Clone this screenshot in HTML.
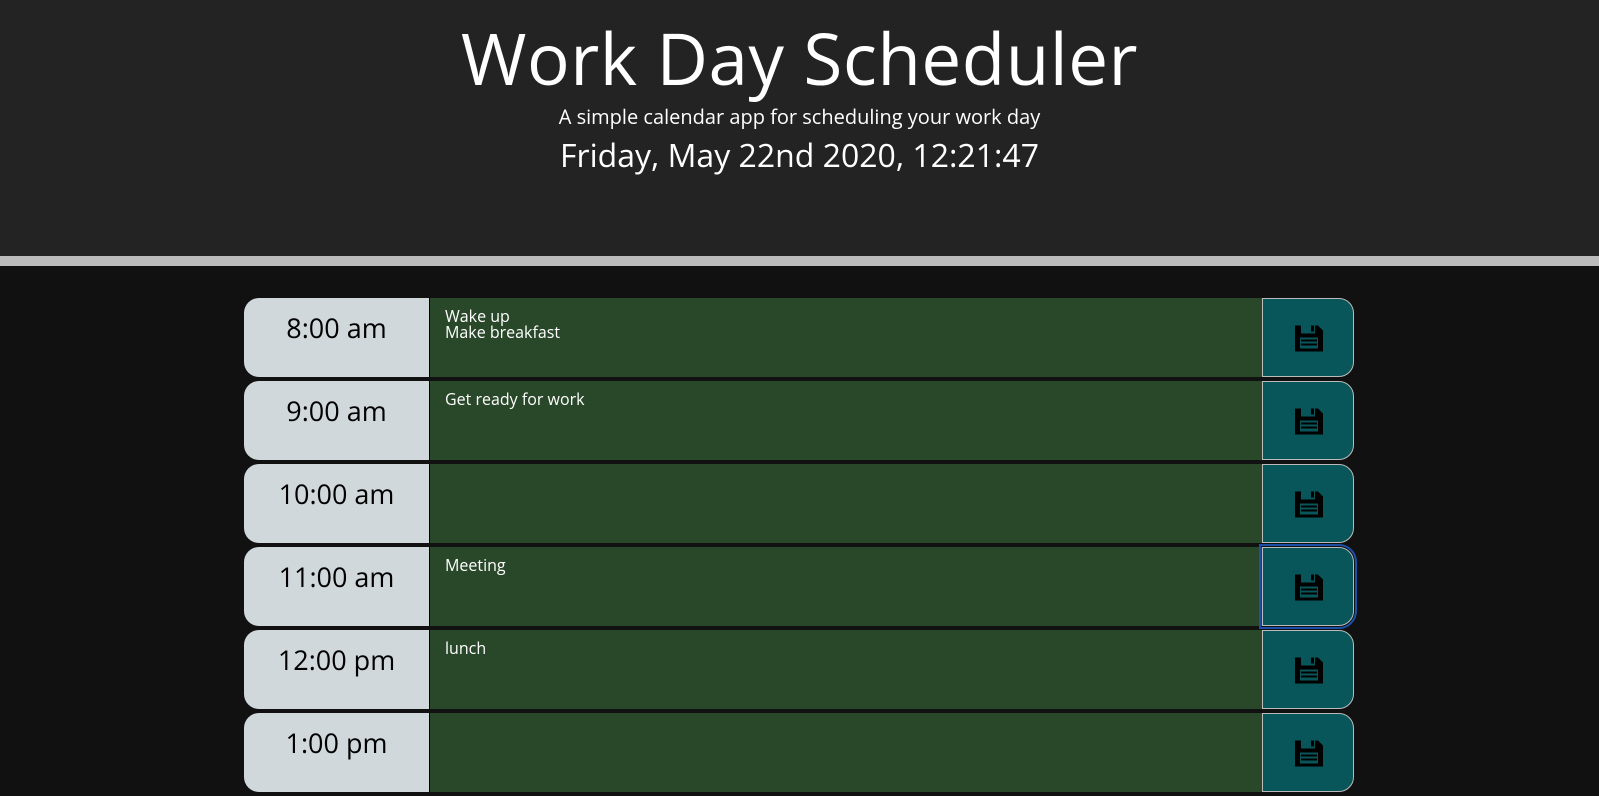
<!DOCTYPE html>
<html><head><style>
body{margin:0;background:#111;font-family:"Open Sans","Liberation Sans",sans-serif;overflow:hidden;width:1599px;height:785px}
.hd{height:256px;background:#232323;color:#fff;text-align:center;border-bottom:10px solid #bbb}
h1{margin:0;padding-top:16px;font-size:71px;font-weight:400;line-height:84px;letter-spacing:0.5px}
.sub{font-size:20px;line-height:24px;margin-top:5px}
.dt{font-size:32px;line-height:40px;margin-top:7px}
.c{position:absolute;left:244px;top:298px}
.r{position:relative;height:79px;margin-bottom:4px;width:1110px}
.t{position:absolute;left:0;top:0;width:185px;height:79px;background:#d0d8dc;border-radius:15px 0 0 15px;text-align:center;font-size:27px;line-height:60px;color:#000}
.a{position:absolute;left:185px;top:0;width:833px;height:79px;background:#294729;border-left:1px solid #000;color:#fff;font-size:16px;line-height:16px;padding:10px 15px;box-sizing:border-box}
.b{position:absolute;left:1018px;top:0;width:92px;height:79px;background:#09565a;border:1px solid #bbb;border-radius:0 15px 15px 0;box-sizing:border-box}
.b svg{position:absolute;left:32px;top:24px}
</style></head><body>
<div class="hd"><h1>Work Day Scheduler</h1><div class="sub">A simple calendar app for scheduling your work day</div><div class="dt">Friday, May 22nd 2020, 12:21:47</div></div>
<div class="c">
<div class="r"><div class="t">8:00 am</div><div class="a">Wake up<br>Make breakfast</div><div class="b"><svg width="28" height="29" viewBox="0 0 28 28"><path d="M0 2h6v8h14V2h3l5 5v21H0z" fill="#000"/><rect x="16" y="2" width="3" height="6" fill="#000"/><rect x="5" y="14" width="18" height="11" fill="#09565a"/><rect x="6" y="16" width="16" height="2" fill="#000"/><rect x="6" y="20" width="16" height="2" fill="#000"/></svg></div></div>
<div class="r"><div class="t">9:00 am</div><div class="a">Get ready for work</div><div class="b"><svg width="28" height="29" viewBox="0 0 28 28"><path d="M0 2h6v8h14V2h3l5 5v21H0z" fill="#000"/><rect x="16" y="2" width="3" height="6" fill="#000"/><rect x="5" y="14" width="18" height="11" fill="#09565a"/><rect x="6" y="16" width="16" height="2" fill="#000"/><rect x="6" y="20" width="16" height="2" fill="#000"/></svg></div></div>
<div class="r"><div class="t">10:00 am</div><div class="a"></div><div class="b"><svg width="28" height="29" viewBox="0 0 28 28"><path d="M0 2h6v8h14V2h3l5 5v21H0z" fill="#000"/><rect x="16" y="2" width="3" height="6" fill="#000"/><rect x="5" y="14" width="18" height="11" fill="#09565a"/><rect x="6" y="16" width="16" height="2" fill="#000"/><rect x="6" y="20" width="16" height="2" fill="#000"/></svg></div></div>
<div class="r"><div class="t">11:00 am</div><div class="a">Meeting</div><div class="b" style="outline:2px solid #1d4fa8;outline-offset:1px"><svg width="28" height="29" viewBox="0 0 28 28"><path d="M0 2h6v8h14V2h3l5 5v21H0z" fill="#000"/><rect x="16" y="2" width="3" height="6" fill="#000"/><rect x="5" y="14" width="18" height="11" fill="#09565a"/><rect x="6" y="16" width="16" height="2" fill="#000"/><rect x="6" y="20" width="16" height="2" fill="#000"/></svg></div></div>
<div class="r"><div class="t">12:00 pm</div><div class="a">lunch</div><div class="b"><svg width="28" height="29" viewBox="0 0 28 28"><path d="M0 2h6v8h14V2h3l5 5v21H0z" fill="#000"/><rect x="16" y="2" width="3" height="6" fill="#000"/><rect x="5" y="14" width="18" height="11" fill="#09565a"/><rect x="6" y="16" width="16" height="2" fill="#000"/><rect x="6" y="20" width="16" height="2" fill="#000"/></svg></div></div>
<div class="r"><div class="t">1:00 pm</div><div class="a"></div><div class="b"><svg width="28" height="29" viewBox="0 0 28 28"><path d="M0 2h6v8h14V2h3l5 5v21H0z" fill="#000"/><rect x="16" y="2" width="3" height="6" fill="#000"/><rect x="5" y="14" width="18" height="11" fill="#09565a"/><rect x="6" y="16" width="16" height="2" fill="#000"/><rect x="6" y="20" width="16" height="2" fill="#000"/></svg></div></div>
</div>
</body></html>
